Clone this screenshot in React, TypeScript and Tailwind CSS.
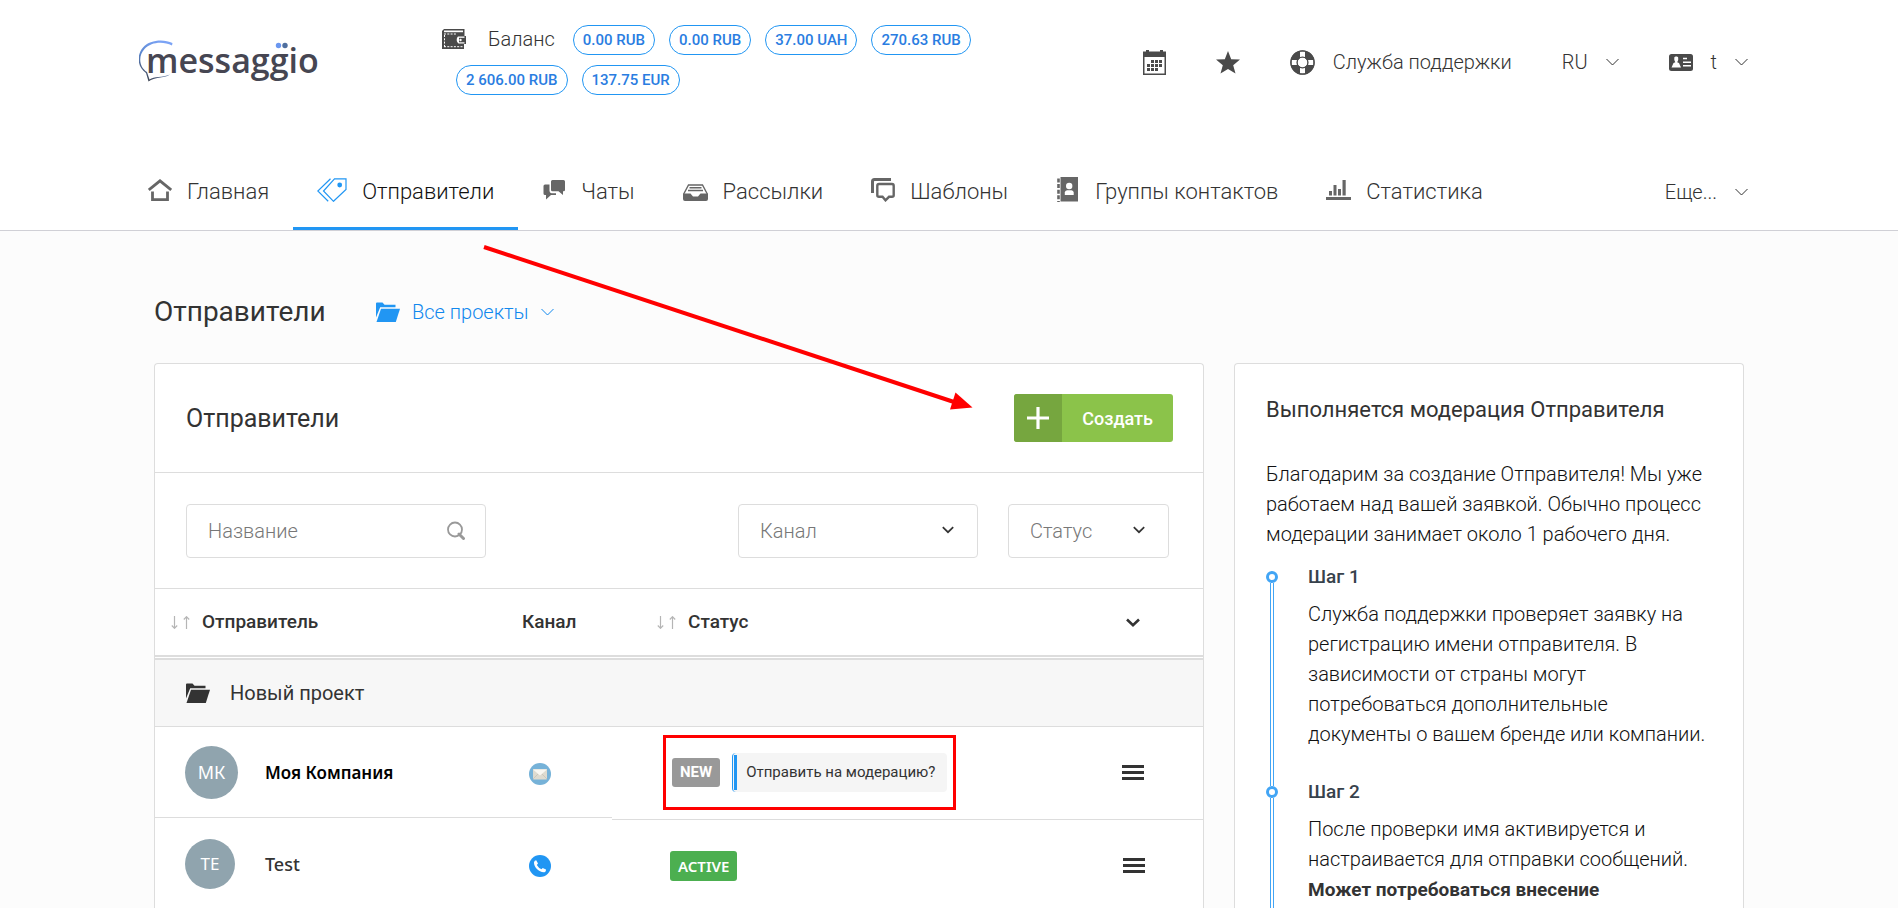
import type { ReactNode } from "react";

type IconProps = { className?: string };

const balances = ["0.00 RUB", "0.00 RUB", "37.00 UAH", "270.63 RUB", "2 606.00 RUB", "137.75 EUR"];

function Logo() {
  return (
    <svg width="190" height="62" viewBox="0 -8 190 62" aria-label="messaggio" role="img">
      <defs>
        <linearGradient id="bubble" x1="0.6" y1="0" x2="0.2" y2="1">
          <stop offset="0" stopColor="#7ba3f5" />
          <stop offset="0.45" stopColor="#5b87cf" />
          <stop offset="1" stopColor="#3d4049" />
        </linearGradient>
      </defs>
      <path
        d="M33 6.500C24 2 12 3 5.500 10C-1 17 0 28 8 33L10.500 40.500C15 37 23 39 31 35.500C24 40 16 37.500 9.500 42.500L7 34C-2 28 -2.500 16 4 8.500C11 0.500 25 0 33.500 4Z"
        fill="url(#bubble)"
      />
      <text x="7" y="34" fontFamily="'Open Sans', sans-serif" fontSize="34" fontWeight="600" fill="#464652">
        messaggio
      </text>
      <circle cx="139.500" cy="6.500" r="2.700" fill="#6b97f0" />
      <circle cx="146" cy="6.500" r="2.700" fill="#4f6f9f" />
    </svg>
  );
}

function Chevron({ className = "" }: IconProps) {
  return (
    <svg className={className} width="13" height="8" viewBox="0 0 13 8" fill="none" stroke="currentColor" strokeWidth="1">
      <path d="M0.500 1L6.500 7L12.500 1" />
    </svg>
  );
}

function BoldChevron({ className = "" }: IconProps) {
  return (
    <svg className={className} width="14" height="9" viewBox="0 0 14 9" fill="none" stroke="currentColor" strokeWidth="2.600">
      <path d="M1 1.500L7 7.200L13 1.500" />
    </svg>
  );
}

function SelectChevron({ className = "" }: IconProps) {
  return (
    <svg className={className} width="12" height="8" viewBox="0 0 12 8" fill="none" stroke="currentColor" strokeWidth="1.700">
      <path d="M0.800 1.200L6 6.200L11.200 1.200" />
    </svg>
  );
}

function WalletIcon() {
  return (
    <svg width="24" height="20" viewBox="0 0 24 20">
      <path d="M2 0H22.500V7H24V15H22V20H0V2Z" fill="#4a4a4a" />
      <path d="M2 1.500H21V3.200H2Z" fill="#fff" />
      <path d="M2 5H15M2.500 6V18M2 17.700H20.500" stroke="#fff" strokeWidth="1" strokeDasharray="2 1.300" fill="none" />
      <path d="M14.500 7.500H22.500V14.500H16.500C14.500 13 14 9.500 16 7.500Z" fill="#fff" />
      <path d="M17 8.800H23V13.300H17Z" fill="#4a4a4a" />
      <circle cx="18.500" cy="11" r="1.200" fill="#fff" />
    </svg>
  );
}

function CalendarIcon() {
  const cells = [
    [8, 10], [12, 10], [16, 10],
    [4, 14], [8, 14], [12, 14], [16, 14],
    [4, 18], [8, 18], [12, 18],
  ];
  return (
    <svg width="23" height="25" viewBox="0 0 23 25" fill="#4a4a4a">
      <path d="M0 1.500H3V0H6V1.500H17V0H20V1.500H23V25H0ZM1.500 7V23.500H21.500V7Z" fillRule="evenodd" />
      {cells.map(([x, y]) => (
        <rect key={`${x}-${y}`} x={x} y={y} width="3" height="3" />
      ))}
    </svg>
  );
}

function StarIcon() {
  return (
    <svg width="24" height="23" viewBox="0 0 24 23" fill="#4a4a4a">
      <path d="M12 0L15.200 8.300L24 8.600L17.200 14.200L19.500 22.500L12 18L4.500 22.500L6.800 14.200L0 8.600L8.800 8.300Z" />
    </svg>
  );
}

function LifebuoyIcon() {
  return (
    <svg width="25" height="25" viewBox="0 0 25 25">
      <circle cx="12.500" cy="12.500" r="8.500" fill="none" stroke="#4a4a4a" strokeWidth="7" />
      <g stroke="#fff" strokeWidth="5" fill="none">
        <path d="M12.500 1.500V7M12.500 18V23.500M1.500 12.500H7M18 12.500H23.500" />
      </g>
      <circle cx="12.500" cy="12.500" r="11.600" fill="none" stroke="#4a4a4a" strokeWidth="1.400" />
      <circle cx="12.500" cy="12.500" r="5.500" fill="none" stroke="#4a4a4a" strokeWidth="1.200" />
    </svg>
  );
}

function IdCardIcon() {
  return (
    <svg width="24" height="17" viewBox="0 0 24 17">
      <rect width="24" height="17" rx="2.500" fill="#4a4a4a" />
      <path d="M2.500 13.500L4.500 9L6.300 8.200L5.300 6V3.500C6 2.200 8.500 2.200 9.200 3.500V6L8.200 8.200L10 9L12 13.500Z" fill="#fff" />
      <path d="M14 4.500H18M14 8.200H22M14 11.800H22" stroke="#fff" strokeWidth="1.600" />
    </svg>
  );
}

function HomeIcon() {
  return (
    <svg width="24" height="22" viewBox="0 0 24 22" fill="none" stroke="#666" strokeWidth="2.800">
      <path d="M0.800 11L12 1.800L23.200 11" />
      <path d="M4.500 12.500V20.600H19.500V12.500" />
    </svg>
  );
}

function TagsIcon() {
  return (
    <svg width="30" height="24" viewBox="0 0 30 24" fill="none" stroke="#2196f3" strokeWidth="1.200">
      <path d="M17.500 0.800H29V11.500L16.500 23.300L6.500 13Z" />
      <path d="M13.500 0.800L0.800 13L11.200 23.300" />
      <circle cx="22.700" cy="7" r="2.400" fill="#2196f3" stroke="none" />
    </svg>
  );
}

function ChatIcon() {
  return (
    <svg width="24" height="20" viewBox="-1 0 24 20" fill="#666">
      <path d="M9.500 0H20.500Q22 0 22 1.500V10Q22 11.300 20.500 11.300H20V15L15.500 11.300H9.500Q8 11.300 8 10V1.500Q8 0 9.500 0Z" />
      <path d="M6.500 4.500H2Q0.500 4.500 0.500 6V13.500Q0.500 15 2 15H3V19.500L8 15H13V13.300H8.500Q6.500 13 6.500 11Z" />
    </svg>
  );
}

function InboxIcon() {
  return (
    <svg width="25" height="23" viewBox="0 -6 25 23" fill="none" stroke="#666">
      <path d="M0.700 10L5.500 1H19.500L24.300 10" strokeWidth="1.400" />
      <path d="M6.500 3.800H18.500M5 6.500H20" strokeWidth="1.400" />
      <path d="M0 9.500H7.500L10 12.500H15L17.500 9.500H25V15Q25 17 23 17H2Q0 17 0 15Z" fill="#666" stroke="none" />
    </svg>
  );
}

function TemplatesIcon() {
  return (
    <svg width="24" height="24" viewBox="0 0 24 24" fill="none" stroke="#666">
      <path d="M1.500 15V3.500Q1.500 1.500 3.500 1.500H20" strokeWidth="3" />
      <path d="M8 6H21Q22.700 6 22.700 7.700V17.300Q22.700 18.800 21 18.800H18L14.500 22.300L11.500 18.800H8Q6.300 18.800 6.300 17.300V7.700Q6.300 6 8 6Z" strokeWidth="2.400" />
    </svg>
  );
}

function ContactsIcon() {
  return (
    <svg width="24" height="25" viewBox="-1 0 24 25">
      <path d="M3.500 0H21V24.500H3.500Z" fill="#666" />
      <path d="M1.500 1.500V25" stroke="#666" strokeWidth="2.600" strokeDasharray="4 1.600" />
      <circle cx="12.200" cy="9" r="3.200" fill="#fff" />
      <path d="M7.800 18V15.500Q8 13.500 10 13.300H14.500Q16.500 13.500 16.700 15.500V18Z" fill="#fff" />
    </svg>
  );
}

function StatsIcon() {
  return (
    <svg width="25" height="20" viewBox="0 0 25 20" fill="#666">
      <path d="M0 17H25V20H0ZM3 11H6V15.500H3ZM7.500 5H10.500V15.500H7.500ZM12 9H15V15.500H12ZM16.500 0H19.700V15.500H16.500Z" />
    </svg>
  );
}

function FolderIcon({ className = "" }: IconProps) {
  return (
    <svg className={className} width="24" height="20" viewBox="0 0 24 20" fill="currentColor">
      <path d="M0 1.500Q0 0.500 1 0.500H6.500L8.500 2.800H19.500V5.200H4.200L0 15.500Z" />
      <path d="M5 6.800H24L19.800 20H0.500Z" />
    </svg>
  );
}

function SearchIcon({ className = "" }: IconProps) {
  return (
    <svg className={className} width="18" height="19" viewBox="0 0 18 19" fill="none" stroke="#999">
      <circle cx="8" cy="8.500" r="7" strokeWidth="1.800" />
      <path d="M12 13L16.500 17.500" strokeWidth="3" strokeLinecap="round" />
    </svg>
  );
}

function SortIcon() {
  return (
    <svg width="19" height="13" viewBox="0 0 19 13" fill="none" stroke="#b5b5b5" strokeWidth="1.200">
      <path d="M3.500 0V12M0.800 9.500L3.500 12.300L6.200 9.500" />
      <path d="M15.500 13V1M12.800 3.500L15.500 0.700L18.200 3.500" />
    </svg>
  );
}

function MailBadge() {
  return (
    <svg width="22" height="22" viewBox="0 0 22 22">
      <circle cx="11" cy="11" r="11" fill="#76b2d8" />
      <rect x="4" y="6" width="14" height="10.500" rx="0.800" fill="#dedbd0" />
      <path d="M4 6.500L11 12.500L18 6.500Z" fill="#f8f7f2" />
      <path d="M4 16L9 11M18 16L13 11" stroke="#c3c0b4" strokeWidth="0.700" />
    </svg>
  );
}

function PhoneBadge() {
  return (
    <svg width="22" height="22" viewBox="0 0 22 22">
      <circle cx="11" cy="11" r="11" fill="#2196f3" />
      <path
        d="M7.200 5.200L9 8.600L7.800 10Q9.500 13 12.500 14.300L13.700 13L17 14.500Q17.300 16.500 15.500 17.200C10.500 17.800 4.600 12 5 7.200Q5.500 5.200 7.200 5.200Z"
        fill="#fff"
      />
    </svg>
  );
}

function MenuButton({ label }: { label: string }) {
  return (
    <button type="button" aria-label={label} className="flex w-[22px] flex-col gap-[3px]">
      <span className="h-[3px] w-full bg-[#333]" />
      <span className="h-[3px] w-full bg-[#333]" />
      <span className="h-[3px] w-full bg-[#333]" />
    </button>
  );
}

function NavItem({ icon, children, active = false }: { icon: ReactNode; children: string; active?: boolean }) {
  return (
    <a
      href="#"
      className={
        active
          ? "flex h-full items-center gap-[15px] border-b-[3px] border-[#2196f3] px-6 pt-4 text-[22px] font-light text-[#111]"
          : "flex h-full items-center gap-[15px] border-b-[3px] border-transparent px-6 pt-4 text-[22px] font-light text-[#333]"
      }
    >
      <span className="pb-1">{icon}</span>
      <span>{children}</span>
    </a>
  );
}

function Header() {
  return (
    <header className="border-b border-[#d0d0d6] bg-white">
      <div className="mx-auto max-w-[1650px]">
        <div className="flex h-[124px] items-center pr-[26px] pl-[15px] text-[20px] font-light text-[#333]">
          <a href="#" className="w-[303px] shrink-0">
            <Logo />
          </a>
          <div className="-mt-1 flex w-[560px] flex-wrap items-center gap-y-[10px]">
            <div className="flex h-[30px] items-center pr-1 pb-[3px]">
              <WalletIcon />
              <span className="ml-[22px]">Баланс</span>
            </div>
            {balances.map((amount, i) => (
              <a
                key={i}
                href="#"
                className="ml-[14px] flex h-[30px] items-center rounded-full border border-[#2196f3] px-[9px] text-[15px] font-medium text-[#2a7de1]"
              >
                {amount}
              </a>
            ))}
          </div>
          <div className="ml-auto flex items-center gap-[50px]">
            <button type="button" aria-label="Календарь"><CalendarIcon /></button>
            <button type="button" aria-label="Избранное"><StarIcon /></button>
            <a href="#" className="flex items-center gap-[18px]">
              <LifebuoyIcon />
              Служба поддержки
            </a>
            <button type="button" className="flex items-center gap-[18px]">
              RU <Chevron />
            </button>
            <button type="button" className="flex items-center gap-[18px]">
              <IdCardIcon /> t <Chevron />
            </button>
          </div>
        </div>
        <nav className="mt-4 flex h-[90px] items-center pr-[26px]">
          <NavItem icon={<HomeIcon />}>Главная</NavItem>
          <NavItem icon={<TagsIcon />} active>Отправители</NavItem>
          <NavItem icon={<ChatIcon />}>Чаты</NavItem>
          <NavItem icon={<InboxIcon />}>Рассылки</NavItem>
          <NavItem icon={<TemplatesIcon />}>Шаблоны</NavItem>
          <NavItem icon={<ContactsIcon />}>Группы контактов</NavItem>
          <NavItem icon={<StatsIcon />}>Статистика</NavItem>
          <button type="button" className="ml-auto flex items-center gap-[18px] pt-[14px] text-[20px] font-light text-[#333]">
            Еще... <Chevron />
          </button>
        </nav>
      </div>
    </header>
  );
}

function FilterSelect({ label, className }: { label: string; className: string }) {
  return (
    <div className={`relative ${className}`}>
      <select
        aria-label={label}
        className="h-[54px] w-full appearance-none rounded-[4px] border border-[#ddd] bg-white px-[21px] text-[20px] font-light text-[#777]"
      >
        <option>{label}</option>
      </select>
      <SelectChevron className="pointer-events-none absolute top-[22px] right-6 text-[#333]" />
    </div>
  );
}

function SendersCard() {
  return (
    <section className="rounded-t-[4px] border border-b-0 border-[#ddd] bg-white">
      <div className="flex h-[109px] items-center justify-between border-b border-[#ddd] pr-[30px] pl-[31px]">
        <h2 className="pt-[2px] text-[25px] text-[#333]">Отправители</h2>
        <button type="button" className="flex h-12 items-center overflow-hidden rounded-[3px] bg-[#8bc34a] text-[18px] font-medium text-white">
          <span className="flex h-12 w-12 items-center justify-center bg-[#76a63f]">
            <svg width="22" height="22" viewBox="0 0 22 22" stroke="#fff" strokeWidth="3.200">
              <path d="M11 0V22M0 11H22" />
            </svg>
          </span>
          <span className="px-5">Создать</span>
        </button>
      </div>
      <div className="flex items-center gap-[30px] border-b border-[#ddd] pt-[31px] pr-[34px] pb-[30px] pl-[31px]">
        <div className="relative mr-auto w-[300px]">
          <input
            type="text"
            aria-label="Название"
            placeholder="Название"
            className="h-[54px] w-full rounded-[4px] border border-[#ddd] px-[21px] text-[20px] font-light text-[#333] placeholder:text-[#777]"
          />
          <SearchIcon className="absolute top-[17px] right-[21px]" />
        </div>
        <FilterSelect label="Канал" className="w-[240px]" />
        <FilterSelect label="Статус" className="w-[161px]" />
      </div>
      <table className="w-full table-fixed border-collapse text-left">
        <colgroup>
          <col className="w-[337px]" />
          <col className="w-[120px]" />
          <col />
          <col className="w-[112px]" />
        </colgroup>
        <thead>
          <tr className="h-[66px] text-[19px] text-[#333]">
            <th className="p-0 pl-4 font-medium">
              <span className="flex items-center gap-3"><SortIcon />Отправитель</span>
            </th>
            <th className="p-0 pl-[30px] font-medium">Канал</th>
            <th className="p-0 pl-[45px] font-medium">
              <span className="flex items-center gap-3"><SortIcon />Статус</span>
            </th>
            <th className="p-0 pl-[35px]">
              <button type="button" aria-label="Развернуть" className="block"><BoldChevron className="text-[#333]" /></button>
            </th>
          </tr>
        </thead>
        <tbody>
          <tr>
            <td colSpan={4} className="p-0">
              <div className="h-[5px] border-y-2 border-[#ddd]" />
              <div className="flex h-[67px] items-center gap-5 border-b border-[#ddd] bg-[#f7f7f7] pl-[31px] text-[20px] text-[#333]">
                <FolderIcon /> Новый проект
              </div>
            </td>
          </tr>
          <tr className="align-top">
            <td className="p-0">
              <div className="flex h-[91px] items-center gap-[27px] border-b border-[#ddd] pl-[30px]">
                <span className="flex h-[53px] w-[53px] items-center justify-center rounded-full bg-[#90a4ae] font-['Noto_Sans'] text-[18px] text-white">МК</span>
                <span className="pt-[2px] font-['Noto_Sans'] text-[17px] font-semibold text-black">Моя Компания</span>
              </div>
            </td>
            <td className="p-0">
              <div className="flex h-[91px] items-center border-b border-[#ddd] pt-1 pl-[37px]"><MailBadge /></div>
            </td>
            <td className="p-0">
              <div className="flex h-[93px] items-center border-b border-[#ddd] pb-[2px] pl-[51px]">
                <div className="flex h-[75px] items-center gap-3 border-[3px] border-[#f00] px-[6px]">
                  <span className="rounded-[3px] bg-[#999] px-2 py-1 text-[15px] leading-[21px] font-bold text-white">NEW</span>
                  <a href="#" className="flex h-[39px] items-center rounded-[4px] border-l border-[#2196f3] bg-[#f5f5f5] pr-3 pl-px text-[15px] text-[#333]">
                    <span className="mr-[9px] h-[35px] w-[3px] bg-[#2196f3]" />
                    Отправить на модерацию?
                  </a>
                </div>
              </div>
            </td>
            <td className="p-0">
              <div className="flex h-[93px] items-center border-b border-[#ddd] pb-[2px] pl-[31px]">
                <MenuButton label="Меню: Моя Компания" />
              </div>
            </td>
          </tr>
          <tr>
            <td className="p-0">
              <div className="flex h-[88px] items-center gap-[30px] pl-[30px]">
                <span className="flex h-[50px] w-[50px] items-center justify-center rounded-full bg-[#90a4ae] font-['Noto_Sans'] text-[17px] text-white">TE</span>
                <span className="font-['Noto_Sans'] text-[18px] font-medium text-[#333]">Test</span>
              </div>
            </td>
            <td className="p-0 pt-1 pl-[37px]"><PhoneBadge /></td>
            <td className="p-0 pt-1 pl-[58px]">
              <span className="inline-block rounded-[3px] bg-[#4caf50] px-2 py-1 font-['Noto_Sans'] text-[15px] leading-[22px] font-semibold text-white">ACTIVE</span>
            </td>
            <td className="p-0 pt-[2px] pl-8"><MenuButton label="Меню: Test" /></td>
          </tr>
        </tbody>
      </table>
    </section>
  );
}

function Step({ title, children, last = false }: { title: string; children: ReactNode; last?: boolean }) {
  return (
    <li className={last ? "flex flex-1 gap-[30px]" : "flex gap-[30px]"}>
      <div className="flex w-3 shrink-0 flex-col">
        <span className="h-3 w-3 shrink-0 rounded-full border-[3px] border-[#42a5f5] bg-white" />
        <span className="ml-1 w-1 flex-1 border-x border-[#42a5f5]" />
      </div>
      <div className={last ? "-mt-[9px]" : "-mt-[9px] pb-[37px]"}>
        <h3 className="mb-[7px] text-[19px] font-medium text-[#37424c]">{title}</h3>
        <p>{children}</p>
      </div>
    </li>
  );
}

function ModerationCard() {
  return (
    <aside className="flex flex-col rounded-t-[4px] border border-b-0 border-[#ddd] bg-white px-[31px] pt-[31px] text-[20px] leading-[30px] font-light text-[#111]">
      <h2 className="mb-[34px] text-[22px] font-normal text-[#333]">Выполняется модерация Отправителя</h2>
      <p>Благодарим за создание Отправителя! Мы уже работаем над вашей заявкой. Обычно процесс модерации занимает около 1 рабочего дня.</p>
      <ol className="mt-[22px] flex flex-1 flex-col">
        <Step title="Шаг 1">
          Служба поддержки проверяет заявку на регистрацию имени отправителя. В зависимости от страны могут потребоваться дополнительные документы о вашем бренде или компании.
        </Step>
        <Step title="Шаг 2" last>
          После проверки имя активируется и настраивается для отправки сообщений. <b className="text-[19px] font-bold text-[#333]">Может потребоваться внесение</b>
        </Step>
      </ol>
    </aside>
  );
}

export default function App() {
  return (
    <div className="relative flex min-h-screen flex-col overflow-x-hidden bg-[#fcfcfc] font-['Roboto',sans-serif]">
      <Header />
      <main className="mx-auto flex w-full max-w-[1590px] flex-1 flex-col">
        <div className="flex h-[132px] items-center pt-[30px]">
          <h1 className="w-[222px] text-[28px] text-[#333]">Отправители</h1>
          <button type="button" className="flex items-center text-[20px] font-light text-[#1188ee]">
            <FolderIcon className="text-[#2196f3]" />
            <span className="mx-3">Все проекты</span>
            <Chevron />
          </button>
        </div>
        <div className="grid flex-1 grid-cols-[minmax(0,1fr)_510px] gap-[30px]">
          <SendersCard />
          <ModerationCard />
        </div>
      </main>
      <svg className="pointer-events-none absolute top-[240px] left-[480px]" width="500" height="175" viewBox="0 0 500 175" fill="#f00">
        <path d="M4 7L474 162" stroke="#f00" strokeWidth="4" />
        <path d="M492.500 167.500L475.500 152.500L470 169.500Z" />
      </svg>
    </div>
  );
}
